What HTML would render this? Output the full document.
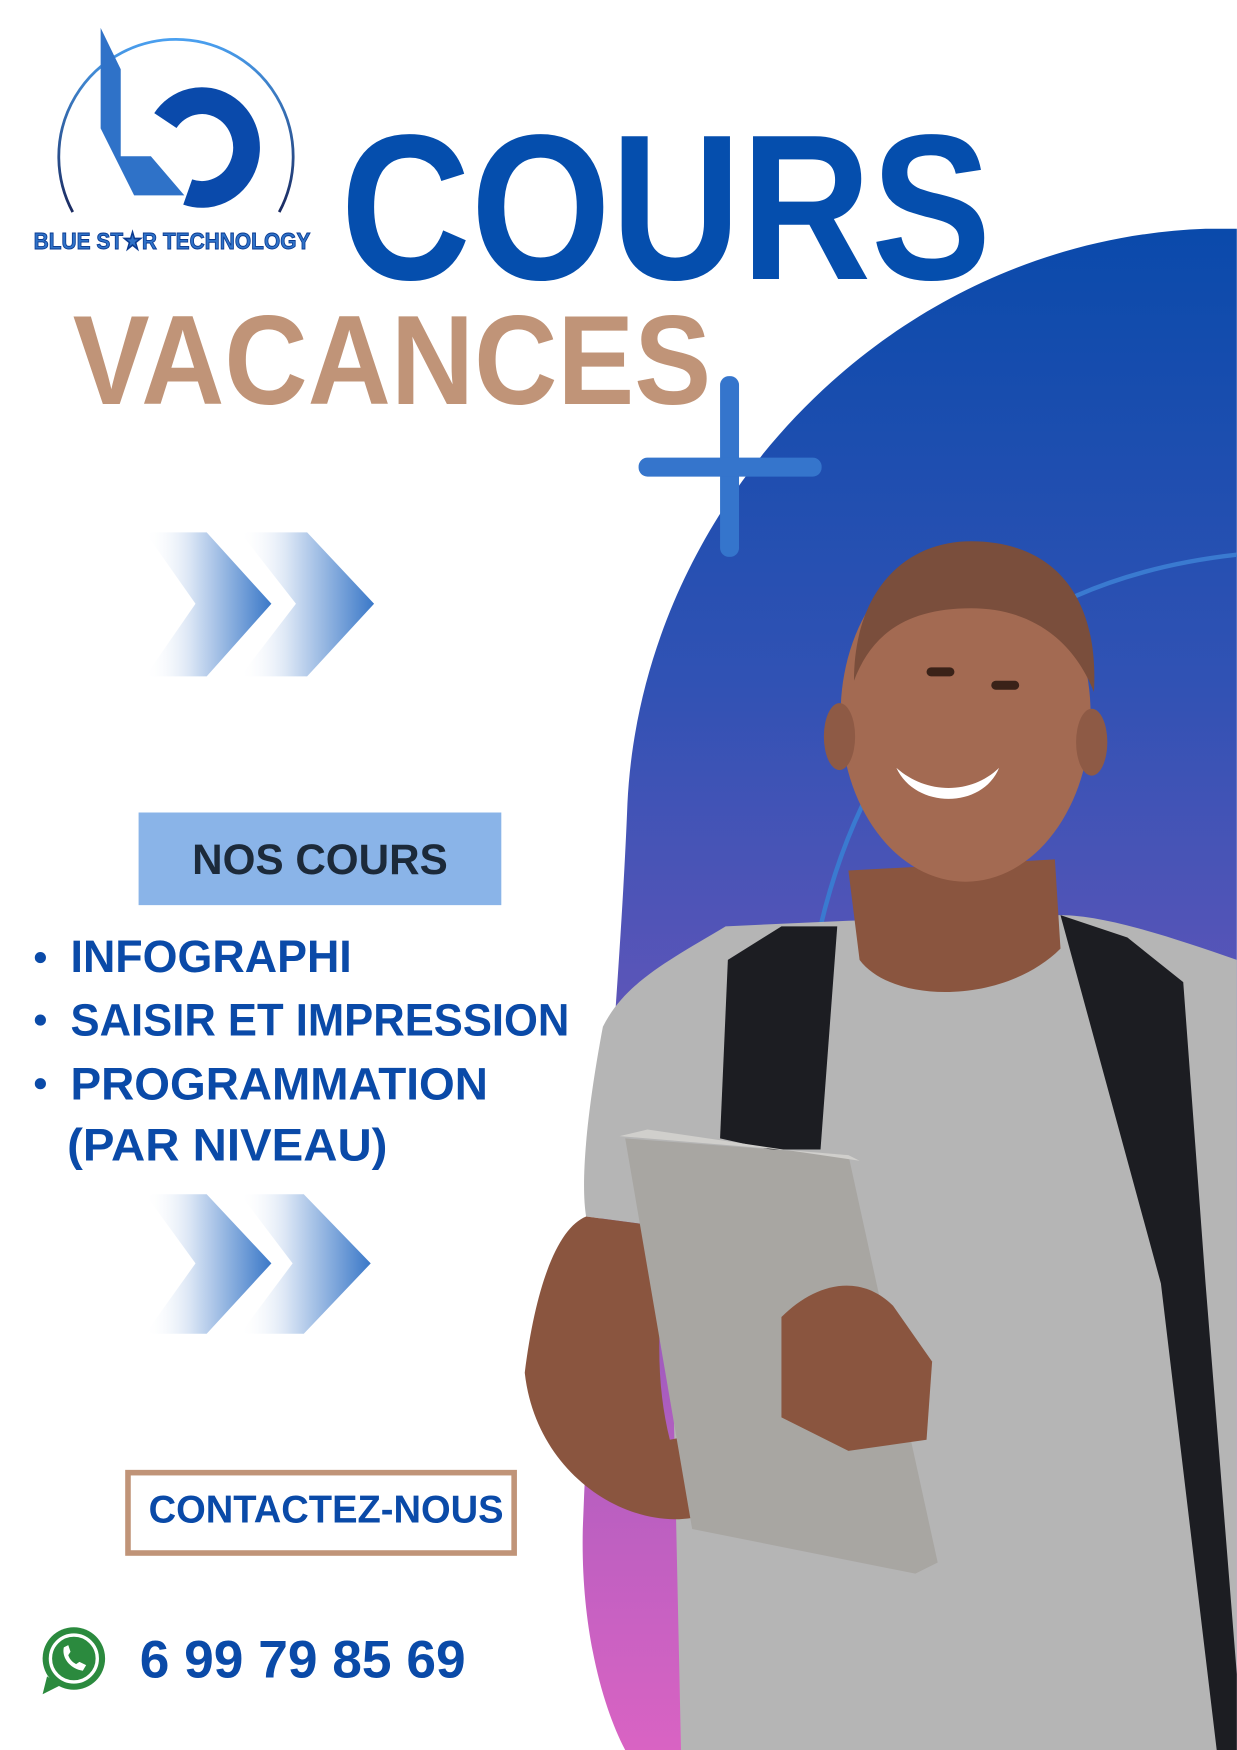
<!DOCTYPE html>
<html><head><meta charset="utf-8"><style>html,body{margin:0;padding:0;background:#fff}svg{display:block}text{font-family:"Liberation Sans",sans-serif;font-weight:bold}</style></head>
<body>
<svg width="1237" height="1750" viewBox="0 0 1108 1568" xmlns="http://www.w3.org/2000/svg">
<defs>
<linearGradient id="bg" x1="0" y1="205" x2="0" y2="1568" gradientUnits="userSpaceOnUse">
<stop offset="0" stop-color="#0a4aab"/><stop offset="0.3" stop-color="#3152b4"/><stop offset="0.5" stop-color="#5a55b8"/><stop offset="0.8" stop-color="#b35ec0"/><stop offset="1" stop-color="#d963c3"/></linearGradient>
<linearGradient id="ch" x1="0" y1="0" x2="1" y2="0"><stop offset="0" stop-color="#fff" stop-opacity="0"/><stop offset="0.35" stop-color="#dbe6f5"/><stop offset="1" stop-color="#3a78c8"/></linearGradient>
<linearGradient id="ring" x1="0" y1="0" x2="0" y2="1"><stop offset="0" stop-color="#4aa0f0"/><stop offset="1" stop-color="#1a2a60"/></linearGradient>
</defs>
<rect width="1108" height="1568" fill="#fff"/>
<path d="M1108,205 L1080,205 C800,215 575,450 562,720 C555,900 530,1150 522,1370 C520,1460 540,1530 560,1568 L1108,1568 Z" fill="url(#bg)"/>
<path d="M735,830 C780,640 900,520 1108,497" fill="none" stroke="#3a7ad0" stroke-width="4"/>
<rect x="645" y="337" width="17" height="162" rx="8" fill="#3575cc"/>
<rect x="572" y="410" width="164" height="17" rx="8" fill="#3575cc"/>
<!-- logo -->
<path d="M65,190 A105,105 0 1 1 250,190" fill="none" stroke="url(#ring)" stroke-width="2.5"/>
<path d="M148,108 A40,42 0 1 1 168,172" fill="none" stroke="#0a4aab" stroke-width="24"/>
<polygon points="90,25 108,62 108,140 135,140 165,175 120,175 90,115" fill="#2f72c8"/>
<text x="30" y="223" font-size="21" fill="#2f72c8" stroke="#0a3a90" stroke-width="0.8" textLength="248" lengthAdjust="spacingAndGlyphs">BLUE ST★R TECHNOLOGY</text>
<text x="305" y="250" font-size="186" fill="#054ead" textLength="583" lengthAdjust="spacingAndGlyphs">COURS</text>
<text x="65" y="362" font-size="114" fill="#c09478" textLength="572" lengthAdjust="spacingAndGlyphs">VACANCES</text>
<g fill="url(#ch)">
<polygon points="130,477 185,477 243,541 185,606 130,606 175,541"/>
<polygon points="215,477 275,477 335,541 275,606 215,606 265,541"/>
<polygon points="130,1070 185,1070 243,1132 185,1195 130,1195 175,1132"/>
<polygon points="215,1070 272,1070 332,1132 272,1195 215,1195 262,1132"/>
</g>
<rect x="124" y="728" width="325" height="83" fill="#8ab4e8"/>
<text x="172" y="783" font-size="38" fill="#1c2a3a" textLength="229" lengthAdjust="spacingAndGlyphs">NOS COURS</text>
<g fill="#0a4aa8">
<circle cx="36" cy="858" r="5"/><circle cx="36" cy="914" r="5"/><circle cx="36" cy="971" r="5"/>
<text x="63" y="871" font-size="41" textLength="252" lengthAdjust="spacingAndGlyphs">INFOGRAPHI</text>
<text x="63" y="928" font-size="41" textLength="447" lengthAdjust="spacingAndGlyphs">SAISIR ET IMPRESSION</text>
<text x="63" y="985" font-size="41" textLength="374" lengthAdjust="spacingAndGlyphs">PROGRAMMATION</text>
<text x="60" y="1040" font-size="41" textLength="287" lengthAdjust="spacingAndGlyphs">(PAR  NIVEAU)</text>
</g>
<rect x="114.5" y="1319.5" width="346" height="72" fill="none" stroke="#c09478" stroke-width="5"/>
<text x="133" y="1364" font-size="35" fill="#0a4aa8" textLength="318" lengthAdjust="spacingAndGlyphs">CONTACTEZ-NOUS</text>
<circle cx="66" cy="1486" r="28" fill="#2b8a3e"/>
<path d="M42,1502 L38,1518 L54,1510 Z" fill="#2b8a3e"/>
<circle cx="66" cy="1486" r="21" fill="none" stroke="#fff" stroke-width="3"/>
<path d="M57,1476 C55,1485 62,1495 74,1497 L77,1492 L71,1489 L68,1491 C64,1489 62,1486 61,1483 L63,1480 L61,1474 Z" fill="#fff"/>
<text x="125" y="1503" font-size="47" fill="#0a4aa8" textLength="292" lengthAdjust="spacingAndGlyphs">6 99 79 85 69</text>
<!-- person -->
<path d="M650,830 C600,860 560,880 540,920 C525,1000 520,1060 525,1090 L600,1100 L610,1568 L1108,1568 L1108,860 C1050,840 990,820 950,820 L760,825 Z" fill="#b5b5b5"/>
<path d="M470,1230 C480,1150 500,1100 525,1090 L600,1100 C590,1170 585,1230 600,1290 L700,1270 L720,1340 L620,1360 C560,1370 480,1320 470,1230 Z" fill="#8a553f"/>
<path d="M652,860 L700,830 L750,830 L735,1030 L690,1030 L645,1020 Z" fill="#1c1d22"/>
<path d="M950,820 L1010,840 L1060,880 L1080,1150 L1100,1400 L1108,1500 L1108,1568 L1090,1568 L1040,1150 Z" fill="#1c1d22"/>
<path d="M760,780 L770,860 C800,900 900,900 950,850 L945,770 Z" fill="#8a553f"/>
<ellipse cx="865" cy="640" rx="112" ry="150" fill="#a36a52"/>
<path d="M765,610 C765,530 810,485 870,485 C940,485 985,530 980,620 C960,570 920,545 870,545 C810,545 780,570 765,610 Z" fill="#7a4e3c"/>
<ellipse cx="752" cy="660" rx="14" ry="30" fill="#8e5a45"/><ellipse cx="978" cy="665" rx="14" ry="30" fill="#8e5a45"/>
<path d="M803,688 C830,712 870,712 895,688 C880,725 820,725 803,688 Z" fill="#fff"/>
<rect x="830" y="598" width="25" height="8" rx="4" fill="#3a2218"/><rect x="888" y="610" width="25" height="8" rx="4" fill="#3a2218"/>
<polygon points="560,1020 760,1035 840,1400 820,1410 620,1370" fill="#a8a6a2"/>
<polygon points="555,1018 580,1012 770,1040 760,1035" fill="#d0cfcc"/>
<path d="M700,1180 C730,1150 770,1140 800,1170 L835,1220 L830,1290 L760,1300 L700,1270 Z" fill="#8a553f"/>
</svg>
</body></html>
